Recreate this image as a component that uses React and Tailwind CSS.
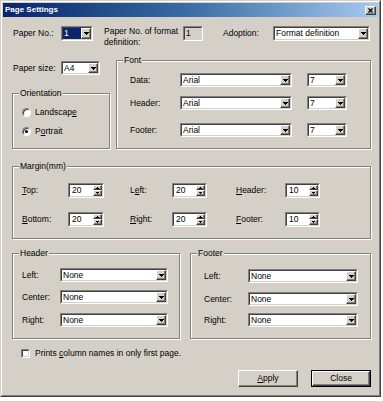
import React from "react";

const FONT = "font-['Liberation_Sans',Arial,sans-serif]";

function DownArrow() {
  return (
    <svg width="5" height="3" viewBox="0 0 5 3" shapeRendering="crispEdges">
      <rect x="0" y="0" width="5" height="1" fill="#000" />
      <rect x="1" y="1" width="3" height="1" fill="#000" />
      <rect x="2" y="2" width="1" height="1" fill="#000" />
    </svg>
  );
}

function SmallArrow({ up }) {
  return (
    <svg width="3" height="2" viewBox="0 0 3 2" shapeRendering="crispEdges">
      {up ? (
        <>
          <rect x="1" y="0" width="1" height="1" fill="#000" />
          <rect x="0" y="1" width="3" height="1" fill="#000" />
        </>
      ) : (
        <>
          <rect x="0" y="0" width="3" height="1" fill="#000" />
          <rect x="1" y="1" width="1" height="1" fill="#000" />
        </>
      )}
    </svg>
  );
}

function Sunken({ className, bg = "bg-white", children }) {
  return (
    <div
      className={`border border-t-[#808080] border-l-[#808080] border-b-white border-r-white ${className}`}
    >
      <div
        className={`flex h-full w-full border border-t-[#404040] border-l-[#404040] border-b-[#d4d0c8] border-r-[#d4d0c8] ${bg}`}
      >
        {children}
      </div>
    </div>
  );
}

function RaisedSmall({ className, children }) {
  return (
    <div
      className={`flex items-center justify-center bg-[#d4d0c8] border border-t-white border-l-white border-b-[#404040] border-r-[#404040] shadow-[inset_-1px_-1px_0_#808080] ${className}`}
    >
      {children}
    </div>
  );
}

function Combo({ className, text, selected }) {
  return (
    <Sunken className={className}>
      <div className="flex-1 flex items-center overflow-hidden whitespace-nowrap">
        {selected ? (
          <span className="h-full w-full bg-[#0a246a] text-white pl-[1px] flex items-center">
            {text}
          </span>
        ) : (
          <span className="pl-[1px]">{text}</span>
        )}
      </div>
      <RaisedSmall className="w-[10px] h-full">
        <DownArrow />
      </RaisedSmall>
    </Sunken>
  );
}

function Spin({ className, value }) {
  return (
    <Sunken className={className}>
      <div className="flex-1 flex items-center pl-[2px]">{value}</div>
      <div className="w-[9px] h-full flex flex-col">
        <RaisedSmall className="w-full h-[5px]">
          <SmallArrow up />
        </RaisedSmall>
        <RaisedSmall className="w-full flex-1">
          <SmallArrow />
        </RaisedSmall>
      </div>
    </Sunken>
  );
}

function Group({ className, title, children }) {
  return (
    <div
      className={`border border-[#808080] shadow-[inset_1px_1px_0_#ffffff,1px_1px_0_#ffffff] flex flex-col ${className}`}
    >
      <div className="-mt-[6px] ml-[6px] px-[1px] self-start bg-[#d4d0c8] leading-[11px]">
        {title}
      </div>
      {children}
    </div>
  );
}

function Radio({ checked, className, children }) {
  return (
    <div className={`flex items-center h-[10px] ${className}`}>
      <div className="ml-[9px] w-[9px] h-[9px] rounded-full border border-t-[#808080] border-l-[#808080] border-b-white border-r-white bg-white shadow-[inset_1px_1px_0_#404040] flex items-center justify-center">
        {checked && <div className="w-[3px] h-[3px] rounded-full bg-black" />}
      </div>
      <div className="ml-[4px]">{children}</div>
    </div>
  );
}

function FontRow({ className, label }) {
  return (
    <div className={`flex items-center h-[14px] pl-[13px] ${className}`}>
      <div className="w-[50px]">{label}</div>
      <Combo className="w-[112px] h-[14px]" text="Arial" />
      <Combo className="ml-[15px] w-[40px] h-[14px]" text="7" />
    </div>
  );
}

function MarginRow({ className, a, b, c, va, vb, vc }) {
  return (
    <div className={`flex items-center h-[15px] pl-[9px] ${className}`}>
      <div className="w-[46px]">{a}</div>
      <Spin className="w-[36px] h-[15px]" value={va} />
      <div className="ml-[26px] w-[42px]">{b}</div>
      <Spin className="w-[35px] h-[15px]" value={vb} />
      <div className="ml-[29px] w-[49px]">{c}</div>
      <Spin className="w-[35px] h-[15px]" value={vc} />
    </div>
  );
}

function HRow({ className, label }) {
  return (
    <div className={`flex items-center h-[14px] pl-[9px] ${className}`}>
      <div className="w-[38px]">{label}</div>
      <Combo className="w-[108px] h-[14px]" text="None" />
    </div>
  );
}

function FRow({ className, label }) {
  return (
    <div className={`flex items-center h-[14px] pl-[13px] ${className}`}>
      <div className="w-[44px]">{label}</div>
      <Combo className="w-[110px] h-[14px]" text="None" />
    </div>
  );
}

function Button({ className, isDefault, children }) {
  const inner = (
    <div className="h-full w-full flex items-center justify-center bg-[#d4d0c8] border border-t-white border-l-white border-b-[#404040] border-r-[#404040] shadow-[inset_-1px_-1px_0_#808080]">
      {children}
    </div>
  );
  if (isDefault) {
    return (
      <div className={`border border-black ${className}`}>{inner}</div>
    );
  }
  return <div className={className}>{inner}</div>;
}

export default function App() {
  return (
    <div className={`w-[383px] h-[401px] bg-white text-[8.5px] text-black ${FONT}`}>
      <div className="w-[381px] h-[397px] border border-t-[#d4d0c8] border-l-[#d4d0c8] border-b-[#404040] border-r-[#404040]">
        <div className="h-full border border-t-white border-l-white border-b-[#808080] border-r-[#808080] bg-[#d4d0c8] p-[1px] flex flex-col">
          {/* Title bar */}
          <div className="h-[14px] flex items-center bg-linear-to-r from-[#0a246a] via-[#3a6ea5] to-[#a6caf0]">
            <div className="ml-[2px] text-white font-bold text-[8px] leading-none">
              Page Settings
            </div>
            <div className="ml-auto mr-[2px]">
              <RaisedSmall className="w-[11px] h-[9px]">
                <svg width="5" height="5" viewBox="0 0 5 5">
                  <path d="M0.5 0.5L4.5 4.5M4.5 0.5L0.5 4.5" stroke="#000" strokeWidth="1.3" />
                </svg>
              </RaisedSmall>
            </div>
          </div>

          {/* Content */}
          <div className="pl-[9px] flex flex-col">
            {/* Row 1 */}
            <div className="mt-[9px] flex items-start">
              <div className="w-[49px] pl-[1px] leading-[15px]">Paper No.:</div>
              <Combo className="w-[32px] h-[15px]" text="1" selected />
              <div className="ml-[11px] w-[79px] leading-[11px]">
                Paper No. of format
                <br />
                definition:
              </div>
              <Sunken className="w-[20px] h-[15px]" bg="bg-[#d4d0c8]">
                <div className="flex items-center pl-[1px]">1</div>
              </Sunken>
              <div className="ml-[20px] w-[50px] leading-[15px]">Adoption:</div>
              <Combo className="w-[97px] h-[15px]" text="Format definition" />
            </div>

            {/* Row 2 */}
            <div className="flex items-start">
              <div className="w-[98px] flex flex-col">
                <div className="mt-[13px] flex items-center h-[14px]">
                  <div className="w-[49px] pl-[1px]">Paper size:</div>
                  <Combo className="w-[39px] h-[14px]" text="A4" />
                </div>
                <Group className="mt-[18px] h-[56px]" title="Orientation">
                  <Radio className="mt-[8px]">
                    Landscap<u>e</u>
                  </Radio>
                  <Radio className="mt-[9px]" checked>
                    P<u>o</u>rtrait
                  </Radio>
                </Group>
              </div>
              <Group className="ml-[6px] mt-[12px] w-[255px] h-[89px]" title="Font">
                <FontRow className="mt-[7px]" label="Data:" />
                <FontRow className="mt-[9px]" label="Header:" />
                <FontRow className="mt-[13px]" label="Footer:" />
              </Group>
            </div>

            {/* Margin */}
            <Group className="mt-[17px] w-[359px] h-[73px]" title="Margin(mm)">
              <MarginRow
                className="mt-[11px]"
                a={<><u>T</u>op:</>}
                b={<>L<u>e</u>ft:</>}
                c={<><u>H</u>eader:</>}
                va="20"
                vb="20"
                vc="10"
              />
              <MarginRow
                className="mt-[14px]"
                a={<><u>B</u>ottom:</>}
                b={<><u>R</u>ight:</>}
                c={<><u>F</u>ooter:</>}
                va="20"
                vb="20"
                vc="10"
              />
            </Group>

            {/* Header / Footer */}
            <div className="mt-[14px] flex items-start">
              <Group className="w-[168px] h-[86px]" title="Header">
                <HRow className="mt-[9px]" label="Left:" />
                <HRow className="mt-[8px]" label="Center:" />
                <HRow className="mt-[9px]" label="Right:" />
              </Group>
              <Group className="ml-[10px] w-[181px] h-[86px]" title="Footer">
                <FRow className="mt-[10px]" label="Left:" />
                <FRow className="mt-[9px]" label="Center:" />
                <FRow className="mt-[7px]" label="Right:" />
              </Group>
            </div>

            {/* Checkbox */}
            <div className="mt-[10px] flex items-center h-[9px]">
              <Sunken className="ml-[9px] w-[9px] h-[9px]" />
              <div className="ml-[5px]">
                Prints <u>c</u>olumn names in only first page.
              </div>
            </div>

            {/* Buttons */}
            <div className="mt-[12px] flex ml-[226px]">
              <Button className="w-[60px] h-[17px]">
                <span>
                  <u>A</u>pply
                </span>
              </Button>
              <Button className="ml-[13px] w-[60px] h-[17px]" isDefault>
                Close
              </Button>
            </div>
          </div>
        </div>
      </div>
    </div>
  );
}
